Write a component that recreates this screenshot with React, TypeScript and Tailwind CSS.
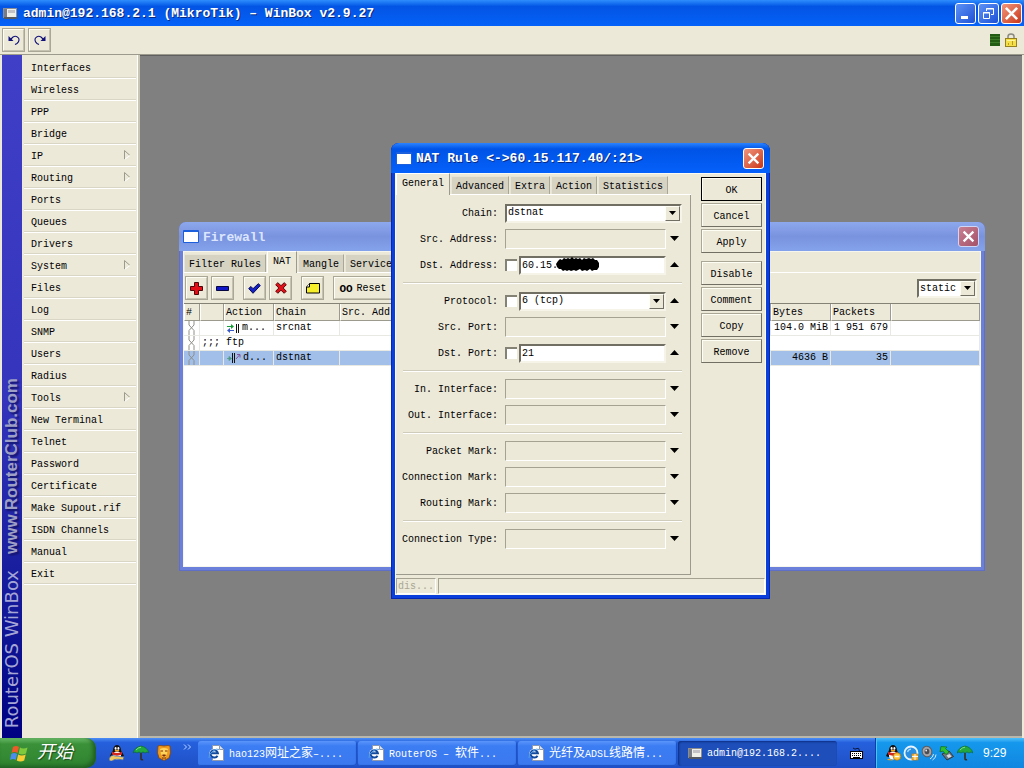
import { useState } from "react";
import type { ReactNode } from "react";

const MENU: { label: string; sub?: boolean }[] = [
  { label: "Interfaces" },
  { label: "Wireless" },
  { label: "PPP" },
  { label: "Bridge" },
  { label: "IP", sub: true },
  { label: "Routing", sub: true },
  { label: "Ports" },
  { label: "Queues" },
  { label: "Drivers" },
  { label: "System", sub: true },
  { label: "Files" },
  { label: "Log" },
  { label: "SNMP" },
  { label: "Users" },
  { label: "Radius" },
  { label: "Tools", sub: true },
  { label: "New Terminal" },
  { label: "Telnet" },
  { label: "Password" },
  { label: "Certificate" },
  { label: "Make Supout.rif" },
  { label: "ISDN Channels" },
  { label: "Manual" },
  { label: "Exit" },
];

const raised =
  "border border-t-[#fffef5] border-l-[#fffef5] border-r-[#c5c2b2] border-b-[#c5c2b2] shadow-[0_0_0_1px_#aaa797] bg-[#ece9d8]";

function Cross({ className }: { className: string }) {
  return (
    <svg viewBox="0 0 12 12" className={className} aria-hidden="true">
      <path d="M1.5 1.5 10.5 10.5M10.5 1.5 1.5 10.5" stroke="#fff" strokeWidth="2.1" fill="none" />
    </svg>
  );
}

function AppIcon() {
  return (
    <svg viewBox="0 0 14 11" className="h-[11px] w-[14px] shrink-0" aria-hidden="true">
      <rect x="0.5" y="0.5" width="13" height="9" fill="#efefea" stroke="#8d8d90" />
      <rect x="1" y="1" width="3" height="8" fill="#777b86" />
      <rect x="5" y="2" width="7" height="3" fill="#c2c2c6" />
      <rect x="1" y="9" width="13" height="2" fill="#55585f" />
    </svg>
  );
}

function PlainIcon() {
  return (
    <svg viewBox="0 0 16 13" className="h-[13px] w-4 shrink-0" aria-hidden="true">
      <rect width="16" height="13" rx="1" fill="#1c5fdc" />
      <rect x="1" y="2" width="14" height="10" fill="#fff" />
    </svg>
  );
}

function Down({ up = false }: { up?: boolean }) {
  return (
    <svg viewBox="0 0 9 5" className="h-[5px] w-[9px]" aria-hidden="true">
      <path d={up ? "M0 5 4.5 0 9 5Z" : "M0 0H9L4.5 5Z"} fill="#000" />
    </svg>
  );
}

function ComboArrow() {
  return (
    <span className="pointer-events-none absolute top-[2px] right-[2px] bottom-[2px] flex w-[15px] items-center justify-center border border-t-[#fffef5] border-l-[#fffef5] border-r-[#716f64] border-b-[#716f64] bg-[#ece9d8]">
      <svg viewBox="0 0 7 4" className="h-1 w-[7px]" aria-hidden="true">
        <path d="M0 0H7L3.5 4Z" fill="#000" />
      </svg>
    </span>
  );
}

function ToolButton({ label, wide, children }: { label: string; wide?: boolean; children: ReactNode }) {
  return (
    <button
      type="button"
      aria-label={label}
      className={`flex h-[22px] shrink-0 items-center justify-center ${wide ? "w-[58px] gap-1 pt-px" : "w-[21px]"} ${raised}`}
    >
      {children}
    </button>
  );
}

function TitleControl({ label, red, dim, children }: { label: string; red?: boolean; dim?: boolean; children: ReactNode }) {
  const tone = dim
    ? "from-[#c98092] to-[#a4516a] border-[#cfd6f6]"
    : red
      ? "from-[#f0957c] to-[#c9330f] border-white"
      : "from-[#5e91f5] to-[#1d50d6] border-white";
  return (
    <button
      type="button"
      aria-label={label}
      className={`flex size-[21px] items-center justify-center rounded-[3px] border bg-linear-to-br ${tone}`}
    >
      {children}
    </button>
  );
}

function Tab({ children, active }: { children: ReactNode; active?: boolean }) {
  return (
    <button
      type="button"
      role="tab"
      aria-selected={!!active}
      className={
        active
          ? "z-10 -mb-px h-[22px] border-t border-l border-r border-t-white border-l-white border-r-[#9c9a8c] bg-[#ece9d8] px-[5px] pb-[2px] whitespace-nowrap"
          : "h-[18px] border-t border-r border-l border-t-[#e8e5d6] border-l-[#e8e5d6] border-r-[#a9a797] bg-[#d6d3c3] px-1 pt-[2px] whitespace-nowrap"
      }
    >
      {children}
    </button>
  );
}

/* ---------- Firewall window ---------- */

function Chain() {
  return (
    <svg viewBox="0 0 9 14" className="mx-auto block h-[14px] w-[9px]" aria-hidden="true">
      <path d="M2 0V4L7 9.500V14M7 0V4L2 9.500V14" stroke="#908e88" fill="none" />
    </svg>
  );
}

function FirewallWindow() {
  const th =
    "h-[17px] border-r border-b border-r-[#9c9a8c] border-b-[#9c9a8c] border-l border-l-white bg-[#ece9d8] p-0 pt-[2px] pl-px text-left font-normal whitespace-nowrap overflow-hidden";
  const td = "h-[15px] border-r border-b border-[#e9e9e4] p-0 px-[2px] whitespace-nowrap overflow-hidden";
  return (
    <section
      aria-label="Firewall"
      className="absolute top-[166px] left-[39px] flex h-[349px] w-[806px] flex-col rounded-t-[7px] bg-[#6b80da] p-1 pt-0 shadow-[inset_0_0_0_1px_#5f6fc8]"
    >
      <header className="-mx-1 flex h-[29px] shrink-0 items-center gap-1 rounded-t-[7px] bg-linear-to-b from-[#8ea8ee] via-[#7a93de] to-[#84a2ec] px-1 pr-[6px]">
        <PlainIcon />
        <h2 className="flex-1 pt-[2px] text-[13px] leading-4 font-bold text-[#dbe5ff]">Firewall</h2>
        <TitleControl label="Close Firewall" dim>
          <Cross className="size-[13px]" />
        </TitleControl>
      </header>
      <div className="flex flex-1 flex-col border border-[#f6f5ee] bg-[#ece9d8]">
        <div role="tablist" className="flex h-[21px] items-end gap-px border-b border-white">
          <Tab>Filter Rules</Tab>
          <Tab active>NAT</Tab>
          <Tab>Mangle</Tab>
          <Tab>Service</Tab>
        </div>
        <div className="flex h-[30px] items-center gap-[5px] pr-[3px] pl-[2px]">
          <ToolButton label="Add">
            <svg viewBox="0 0 13 13" className="size-[13px]">
              <path d="M4.5 .5h4v4h4v4h-4v4h-4v-4h-4v-4h4Z" fill="#e30d18" stroke="#4e0608" />
            </svg>
          </ToolButton>
          <ToolButton label="Delete">
            <svg viewBox="0 0 13 5" className="h-[5px] w-[13px]">
              <path d="M.5 .5h12v4h-12Z" fill="#1218c8" stroke="#060640" />
            </svg>
          </ToolButton>
          <div className="w-px" />
          <ToolButton label="Enable">
            <svg viewBox="0 0 13 11" className="h-[11px] w-[13px]">
              <path d="M.7 5.5 3 3.5 5 5.7 10.3.7 12.3 2.5 5 10.3Z" fill="#1420c8" stroke="#080850" />
            </svg>
          </ToolButton>
          <ToolButton label="Disable">
            <svg viewBox="0 0 12 12" className="size-3">
              <path d="M.7 2.7 2.8.7 6 3.7 9.2.7 11.3 2.7 8.2 6 11.3 9.2 9.2 11.3 6 8.2 2.8 11.3.7 9.2 3.8 6Z" fill="#e20e18" stroke="#5c0709" />
            </svg>
          </ToolButton>
          <div className="w-px" />
          <ToolButton label="Comment">
            <svg viewBox="0 0 14 11" className="h-[11px] w-[14px]">
              <path d="M3.5.5h10v9.5h-13v-6Z" fill="#f5ee28" stroke="#000" />
              <path d="M.5 4h3V.5" fill="#fffbd0" stroke="#000" />
            </svg>
          </ToolButton>
          <div className="w-px" />
          <ToolButton label="Reset Counters" wide>
            <b className="text-[11px]">OO</b>
            <span>Reset</span>
          </ToolButton>
          <div className="relative ml-auto">
            <select
              aria-label="Rule filter"
              className="h-[19px] w-[60px] appearance-none border-2 border-t-[#716f64] border-l-[#716f64] border-r-[#f6f4e8] border-b-[#f6f4e8] bg-white pt-px pl-px"
              defaultValue="static"
            >
              <option>static</option>
              <option>dynamic</option>
              <option>all</option>
            </select>
            <ComboArrow />
          </div>
        </div>
        <div className="flex-1 overflow-hidden border-t border-[#848274] bg-white">
          <table className="w-full table-fixed border-separate border-spacing-0">
            <colgroup>
              <col className="w-4" />
              <col className="w-6" />
              <col className="w-[50px]" />
              <col className="w-[66px]" />
              <col className="w-[431px]" />
              <col className="w-[60px]" />
              <col className="w-[60px]" />
              <col />
            </colgroup>
            <thead>
              <tr>
                <th className={`${th} pl-[3px]`}>#</th>
                <th className={th} aria-label="Flags" />
                <th className={th}>Action</th>
                <th className={th}>Chain</th>
                <th className={th}>Src. Address</th>
                <th className={th}>Bytes</th>
                <th className={th}>Packets</th>
                <th className={th} aria-label="More" />
              </tr>
            </thead>
            <tbody>
              <tr>
                <td className={`${td} px-0`}><Chain /></td>
                <td className={td} />
                <td className={td}>
                  <span className="flex items-center gap-[3px]">
                    <svg viewBox="0 0 13 9" className="h-[9px] w-[13px]" aria-hidden="true">
                      <path d="M1 2.5H6" stroke="#18a038" />
                      <path d="M5 0 8 2.5 5 5Z" fill="#18a038" />
                      <path d="M3 6.5H8" stroke="#3858c8" />
                      <path d="M4 4 1 6.5 4 9Z" fill="#3858c8" />
                      <path d="M10.5 0V9M12.5 0V9" stroke="#111" />
                    </svg>
                    m...
                  </span>
                </td>
                <td className={td}>srcnat</td>
                <td className={td} />
                <td className={`${td} text-right`}>104.0 MiB</td>
                <td className={`${td} text-right`}>1 951 679</td>
                <td className={td} />
              </tr>
              <tr>
                <td className={`${td} px-0`}><Chain /></td>
                <td className={td} colSpan={7}>;;; ftp</td>
              </tr>
              <tr className="bg-[#a1bfe8]">
                <td className={`${td} px-0`}><Chain /></td>
                <td className={td} />
                <td className={td}>
                  <span className="flex items-center gap-[2px]">
                    <svg viewBox="0 0 15 10" className="h-[10px] w-[15px]" aria-hidden="true">
                      <path d="M1 5.5H3M3 3.5 5.5 5.5 3 7.5Z" stroke="#4f9a80" fill="#4f9a80" strokeWidth=".8" />
                      <path d="M6.5 0V10M8.5 0V10" stroke="#111" />
                      <path d="M10 6 13.500 2M11 1.500H14V4.500" stroke="#83529c" fill="none" />
                    </svg>
                    d...
                  </span>
                </td>
                <td className={td}>dstnat</td>
                <td className={td} />
                <td className={`${td} text-right`}>4636 B</td>
                <td className={`${td} text-right`}>35</td>
                <td className={td} />
              </tr>
            </tbody>
          </table>
        </div>
      </div>
    </section>
  );
}

/* ---------- NAT rule dialog ---------- */

type Field = {
  id: string;
  label: string;
  kind: "select" | "empty" | "value" | "valueSelect";
  value?: string;
  scribble?: boolean;
};

const GROUPS: Field[][] = [
  [
    { id: "chain", label: "Chain:", kind: "select", value: "dstnat" },
    { id: "src-address", label: "Src. Address:", kind: "empty" },
    { id: "dst-address", label: "Dst. Address:", kind: "value", value: "60.15.", scribble: true },
  ],
  [
    { id: "protocol", label: "Protocol:", kind: "valueSelect", value: "6 (tcp)" },
    { id: "src-port", label: "Src. Port:", kind: "empty" },
    { id: "dst-port", label: "Dst. Port:", kind: "value", value: "21" },
  ],
  [
    { id: "in-interface", label: "In. Interface:", kind: "empty" },
    { id: "out-interface", label: "Out. Interface:", kind: "empty" },
  ],
  [
    { id: "packet-mark", label: "Packet Mark:", kind: "empty" },
    { id: "connection-mark", label: "Connection Mark:", kind: "empty" },
    { id: "routing-mark", label: "Routing Mark:", kind: "empty" },
  ],
  [{ id: "connection-type", label: "Connection Type:", kind: "empty" }],
];

function FieldRow({ field }: { field: Field }) {
  const [value, setValue] = useState(field.value ?? "");
  const isSelect = field.kind === "select" || field.kind === "valueSelect";
  const hasCheck = field.kind === "value" || field.kind === "valueSelect";
  return (
    <div className="flex h-[26px] items-center">
      <label htmlFor={field.id} className="w-[102px] shrink-0 pt-[2px] text-right whitespace-nowrap">
        {field.label}
      </label>
      <div className="ml-[7px] flex flex-1 items-center gap-[2px]">
        {hasCheck && (
          <input
            type="checkbox"
            aria-label={`Invert ${field.label}`}
            className="size-3 shrink-0 appearance-none border-t-2 border-l-2 border-[#848274] bg-white"
          />
        )}
        <div className="relative flex flex-1">
          {isSelect ? (
            <>
              <select
                id={field.id}
                value={value}
                onChange={(e) => setValue(e.target.value)}
                className="h-[19px] w-full appearance-none border-2 border-t-[#716f64] border-l-[#716f64] border-r-[#f6f4e8] border-b-[#f6f4e8] bg-white pl-px"
              >
                <option>{field.value}</option>
              </select>
              <ComboArrow />
            </>
          ) : field.kind === "value" ? (
            <input
              id={field.id}
              value={value}
              onChange={(e) => setValue(e.target.value)}
              className="h-[19px] w-full min-w-0 border-2 border-t-[#716f64] border-l-[#716f64] border-r-[#f6f4e8] border-b-[#f6f4e8] bg-white pl-px"
            />
          ) : (
            <input
              id={field.id}
              value={value}
              onChange={(e) => setValue(e.target.value)}
              className="h-5 w-full min-w-0 border border-t-[#a5a292] border-l-[#a5a292] border-r-white border-b-white bg-[#ece9d8] pl-px"
            />
          )}
          {field.scribble && (
            <svg viewBox="0 0 44 15" className="absolute top-px left-[37px] h-[15px] w-11" aria-hidden="true">
              <path
                d="M2 4 4 2 6 3 8 1 10 2 12 1 14 2 16 0 18 2 20 1 22 2 24 1 26 3 28 1 30 2 33 1 35 2 37 1 39 3 41 3 43 6 43 10 41 13 38 13 36 14 34 12 31 14 29 13 26 14 24 12 22 13 20 14 18 13 15 14 13 13 11 14 9 13 7 14 5 12 3 12 1 10 0 7Z"
                fill="#000"
              />
            </svg>
          )}
        </div>
      </div>
      {field.kind !== "select" && (
        <button
          type="button"
          aria-label={hasCheck ? `Clear ${field.label}` : `Set ${field.label}`}
          className="flex h-5 w-4 shrink-0 items-center justify-center pb-px"
        >
          <Down up={hasCheck} />
        </button>
      )}
    </div>
  );
}

function DialogButton({ children, main }: { children: ReactNode; main?: boolean }) {
  return (
    <button
      type="button"
      className={`h-6 w-full border pt-[3px] shadow-[inset_1px_1px_0_#fffef5] ${
        main ? "border-black" : "border-t-[#aaa797] border-l-[#aaa797] border-r-[#716f64] border-b-[#716f64]"
      }`}
    >
      {children}
    </button>
  );
}

function NatDialog() {
  return (
    <section
      role="dialog"
      aria-label="NAT Rule"
      className="absolute top-[87px] left-[251px] flex h-[456px] w-[379px] flex-col rounded-t-[8px] bg-[#0a3fdb] p-1 pt-0 shadow-[inset_0_0_0_1px_#0427b4]"
    >
      <header className="-mx-1 flex h-[30px] shrink-0 items-center gap-1 rounded-t-[8px] bg-linear-to-b from-[#2b83ff] via-[#0053e6] via-20% to-[#0561fb] px-[5px] pr-[6px]">
        <PlainIcon />
        <h2 className="flex-1 pt-[2px] text-[13px] leading-4 font-bold whitespace-nowrap text-white [text-shadow:1px_1px_#0a2a80]">
          NAT Rule &lt;-&gt;60.15.117.40/:21&gt;
        </h2>
        <TitleControl label="Close NAT Rule" red>
          <Cross className="size-[13px]" />
        </TitleControl>
      </header>
      <div className="flex flex-1 flex-col border border-[#faf9f2] bg-[#ece9d8]">
        <div className="flex flex-1">
          <div className="flex flex-1 flex-col">
            <div role="tablist" className="flex h-[21px] items-end gap-px border-b border-white">
              <Tab active>General</Tab>
              <Tab>Advanced</Tab>
              <Tab>Extra</Tab>
              <Tab>Action</Tab>
              <Tab>Statistics</Tab>
            </div>
            <form className="flex-1 border-r border-b border-[#9c9a8c] pt-[5px] pr-2" onSubmit={(e) => e.preventDefault()}>
              {GROUPS.map((group, i) => (
                <div key={group[0].id}>
                  {i > 0 && (
                    <div className="flex h-[10px] items-center pl-[7px]">
                      <div className="h-[2px] w-full border-t border-b border-t-[#cfccbb] border-b-white" />
                    </div>
                  )}
                  {group.map((f) => (
                    <FieldRow key={f.id} field={f} />
                  ))}
                </div>
              ))}
            </form>
          </div>
          <div className="flex w-[74px] flex-col gap-[2px] pt-[3px] pr-[3px] pl-[10px]">
            <DialogButton main>OK</DialogButton>
            <DialogButton>Cancel</DialogButton>
            <DialogButton>Apply</DialogButton>
            <div className="h-1" />
            <DialogButton>Disable</DialogButton>
            <DialogButton>Comment</DialogButton>
            <DialogButton>Copy</DialogButton>
            <DialogButton>Remove</DialogButton>
          </div>
        </div>
        <footer className="flex h-[19px] gap-[2px] pt-[3px] text-[#a9a693]">
          <div className="w-10 border border-t-[#a5a292] border-l-[#a5a292] border-r-white border-b-white pl-px leading-4">
            dis...
          </div>
          <div className="flex-1 border border-t-[#a5a292] border-l-[#a5a292] border-r-white border-b-white" />
        </footer>
      </div>
    </section>
  );
}

/* ---------- Taskbar ---------- */

function Penguin({ badge }: { badge: "scarf" | "busy" }) {
  return (
    <svg viewBox="0 0 16 16" className="size-4 shrink-0" aria-hidden="true">
      <path d="M1 11C2 8 4 6 4 5 4 2 6 0 8 0s4 2 4 5c0 1 2 3 3 6l-2 1H3Z" fill="#14100f" />
      <ellipse cx="8" cy="10.500" rx="4" ry="4" fill="#fff" />
      <ellipse cx="6.600" cy="3.400" rx="1" ry="1.400" fill="#fff" />
      <ellipse cx="9.400" cy="3.400" rx="1" ry="1.400" fill="#fff" />
      <ellipse cx="8" cy="5.600" rx="2.400" ry=".9" fill="#f5a51b" />
      <path d="M3 6.500Q8 9.500 13 6.500V9.500Q8 11.800 3 9.500Z" fill="#d3281d" />
      {badge === "scarf" ? (
        <path d="M0 14Q2 9 6 11L15 12 14 15Q6 13 3 16H1Z" fill="#f2c95c" stroke="#466fb0" strokeWidth=".7" />
      ) : (
        <>
          <path d="M2 15Q4 12.500 8 15.500Z" fill="#f5a51b" />
          <circle cx="12" cy="11.500" r="3.800" fill="#ffc43a" stroke="#b36b09" strokeWidth=".7" />
          <path d="M9.800 11.500H14.200" stroke="#fff" strokeWidth="1.500" />
        </>
      )}
    </svg>
  );
}

function Umbrella() {
  return (
    <svg viewBox="0 0 16 16" className="size-4 shrink-0" aria-hidden="true">
      <path d="M8 8V13.500Q8 15.300 10 14.500" stroke="#3c2b18" strokeWidth="1.600" fill="none" />
      <path d="M0 8Q2 2 8 1q6 1 8 7-2-2-4 0Q10 6 8 8 6 6 4 8 2 6 0 8Z" fill="#22a83e" stroke="#0b6420" strokeWidth=".6" />
      <path d="M3 5Q5 2.500 8 2.200" stroke="#7fe08a" fill="none" />
    </svg>
  );
}

function Lion() {
  return (
    <svg viewBox="0 0 14 16" className="h-4 w-3.5 shrink-0" aria-hidden="true">
      <path d="M1 1 3 .5 7 1 11 .5 13 1 13.500 8 12 13 7 15.500 2 13 .5 8Z" fill="#f09a1c" stroke="#87440a" strokeWidth=".8" />
      <path d="M3 4Q7 2 11 4L10 9 7 14 4 9Z" fill="#ffd45d" />
      <path d="M3.500 6H6M8 6h2.500M5.500 10h3L7 11.500ZM5 13h4" stroke="#7a2a0a" fill="#7a2a0a" />
    </svg>
  );
}

function PageIcon() {
  return (
    <svg viewBox="0 0 16 16" className="size-4 shrink-0" aria-hidden="true">
      <path d="M4.500.5h7l4 4v11h-11Z" fill="#fff" stroke="#8d98ac" />
      <path d="M11.500.5v4h4" fill="#dfe6f3" stroke="#8d98ac" />
      <circle cx="6" cy="8.500" r="4.600" fill="#fff" />
      <path d="M9.500 10.700A3.700 3.700 0 1 1 9.900 8.200H3.500" stroke="#124a9e" strokeWidth="2" fill="none" />
      <path d="M1 13Q0 10 5 6 9 3 11 4.500" stroke="#52a0ea" fill="none" />
    </svg>
  );
}

function Task({ icon, active, children }: { icon: ReactNode; active?: boolean; children: ReactNode }) {
  return (
    <button
      type="button"
      className={`flex h-[25px] max-w-[159px] min-w-0 flex-1 items-center gap-[5px] overflow-hidden rounded-[3px] pl-[10px] whitespace-nowrap text-white ${
        active
          ? "bg-[#1d4eb9] shadow-[inset_1px_1px_2px_#0d2f83]"
          : "bg-linear-to-b from-[#5b95fb] via-[#3c7df3] via-20% to-[#3a78ee] shadow-[inset_-1px_-1px_1px_#1c4fc0]"
      }`}
    >
      {icon}
      <span className="pt-[2px]">{children}</span>
    </button>
  );
}

function Han({ children }: { children: ReactNode }) {
  return <span className="text-xs leading-3">{children}</span>;
}

function Taskbar() {
  return (
    <footer className="flex h-[30px] shrink-0 items-stretch bg-linear-to-b from-[#4b8df6] via-[#2660dc] via-15% to-[#1f4fc6]">
      <button
        type="button"
        className="flex w-24 shrink-0 items-center gap-2 rounded-r-[10px] bg-linear-to-b from-[#6cbb6a] via-[#3a9138] via-20% to-[#2f8230] pl-[10px] shadow-[inset_-3px_-2px_4px_#1f5d22]"
      >
        <svg viewBox="0 0 19 17" className="h-[17px] w-[19px]" aria-hidden="true">
          <path d="M3 2Q6 0 9 2L7.500 8Q4.500 6 1.500 8Z" fill="#ee5a2a" />
          <path d="M10 2.500Q13 4.500 17.500 2.500L16 8.500Q12 10.500 8.600 8.500Z" fill="#7fc93d" />
          <path d="M1.200 9Q4 7 7.200 9L5.700 15Q3 13 0 15Z" fill="#4c8df0" />
          <path d="M8.200 9.500Q11.500 11.500 15.700 9.500L14.200 15.500Q10.500 17.500 6.700 15.500Z" fill="#f9cd34" />
        </svg>
        <span className="text-[18px] leading-5 text-white italic [text-shadow:1px_1px_1px_#1b4a1c]">开始</span>
      </button>
      <nav aria-label="Quick launch" className="flex w-[102px] shrink-0 items-center gap-2 pl-[13px]">
        <Penguin badge="scarf" />
        <Umbrella />
        <Lion />
        <svg viewBox="0 0 9 6" className="mb-3 ml-1 h-[6px] w-[9px]" aria-hidden="true">
          <path d="M1 .5 3.500 3 1 5.500M5 .5 7.500 3 5 5.500" stroke="#b8d4ff" fill="none" />
        </svg>
      </nav>
      <div className="flex min-w-0 flex-1 items-center gap-px">
        <Task icon={<PageIcon />}>
          hao123<Han>网址之家</Han>–....
        </Task>
        <Task icon={<PageIcon />}>
          RouterOS – <Han>软件</Han>...
        </Task>
        <Task icon={<PageIcon />}>
          <Han>光纤及</Han>ADSL<Han>线路情</Han>...
        </Task>
        <Task icon={<AppIcon />} active>
          admin@192.168.2....
        </Task>
      </div>
      <div className="flex w-[38px] shrink-0 items-center justify-center">
        <svg viewBox="0 0 13 12" className="h-3 w-[13px]" aria-hidden="true">
          <path d="M3 1Q5 3 7 1.500T9.500 4" stroke="#0a1438" fill="none" />
          <rect x=".5" y="4.500" width="12" height="7" fill="#fff" stroke="#000" />
          <path d="M2 6.500H11M2 8.500H11" stroke="#000" strokeDasharray="1 1" />
          <path d="M3 10.500H10" stroke="#000" />
        </svg>
      </div>
      <div className="flex w-[149px] shrink-0 items-center gap-[2px] border-l border-[#0b3fa3] bg-linear-to-b from-[#4cc0fb] via-[#1598ed] via-15% to-[#1186e0] pl-[9px] text-white shadow-[inset_1px_0_#4cc4fb]">
        <Penguin badge="busy" />
        <svg viewBox="0 0 16 16" className="size-4 shrink-0" aria-hidden="true">
          <circle cx="8" cy="8" r="6.500" fill="#2a8fe0" stroke="#e8f4ff" strokeWidth="1.800" />
          <path d="M4.500 7A4 4 0 0 1 8 4.200" stroke="#a9dcff" strokeWidth="1.200" fill="none" />
          <rect x="9" y="9" width="6" height="6" fill="#f6b73c" stroke="#c97d12" strokeWidth=".7" />
          <path d="M12 9V15M9 11.500H15" stroke="#fff" strokeWidth=".9" />
        </svg>
        <svg viewBox="0 0 16 16" className="size-4 shrink-0" aria-hidden="true">
          <ellipse cx="6" cy="6.500" rx="4.800" ry="5.400" fill="#a5a5a8" stroke="#5b5b60" transform="rotate(-20 6 6.500)" />
          <ellipse cx="6" cy="6.500" rx="2.400" ry="2.800" fill="#4c4c54" />
          <circle cx="5.200" cy="5.500" r=".9" fill="#e8e8ee" />
          <path d="M9 14Q12 12.500 12.500 9M11.500 15Q15 13 15 9.500" stroke="#d5e9ff" fill="none" />
        </svg>
        <svg viewBox="0 0 16 16" className="size-4 shrink-0" aria-hidden="true">
          <path d="M3 9 10 6 14.500 11.500 8 15Z" fill="#6e7680" stroke="#30363e" />
          <path d="M7.500 10.500 10.500 9 12.500 11.500 9.500 13Z" fill="#d9dde2" />
          <path d="M1 7 2 1.500 8 2 6.500 3.500 10 7 7 9.500 3.800 6Z" fill="#2fc030" stroke="#0c6a16" strokeWidth=".7" />
        </svg>
        <Umbrella />
        <time className="ml-2 font-[Liberation_Sans] text-xs">9:29</time>
      </div>
    </footer>
  );
}

/* ---------- Main window ---------- */

export default function App() {
  return (
    <div className="flex h-screen flex-col overflow-hidden bg-[#ece9d8] font-['Liberation_Mono','Noto_Sans_CJK_SC',monospace] text-[10px] leading-3 text-black">
      <header className="flex h-[26px] shrink-0 items-center gap-[6px] bg-linear-to-b from-[#2f8dfd] via-[#0354e4] via-25% to-[#0562f8] px-[3px] pr-[2px]">
        <AppIcon />
        <h1 className="flex-1 pt-[2px] text-[13px] leading-4 font-bold whitespace-nowrap text-white [text-shadow:1px_1px_#0a2a80]">
          admin@192.168.2.1 (MikroTik) – WinBox v2.9.27
        </h1>
        <div className="flex gap-[2px]">
          <TitleControl label="Minimize">
            <svg viewBox="0 0 13 13" className="size-[13px]">
              <rect x="2" y="9" width="7" height="3" fill="#fff" />
            </svg>
          </TitleControl>
          <TitleControl label="Restore">
            <svg viewBox="0 0 13 13" className="size-[13px]" fill="none" stroke="#fff">
              <path d="M4.500 4V1.500h7v6H9" />
              <path d="M4 2H12" />
              <path d="M1.500 5.500h6v6h-6ZM1 6H8" />
            </svg>
          </TitleControl>
          <TitleControl label="Close" red>
            <Cross className="size-[15px]" />
          </TitleControl>
        </div>
      </header>

      <div className="flex h-[29px] shrink-0 items-center gap-[5px] border-b border-[#9c9a8c] px-[3px]">
        <ToolButton label="Undo">
          <svg viewBox="0 0 12 10" className="h-[10px] w-3" fill="none" stroke="#101078">
            <path d="M2.500 4.500 5 2Q8 0 10.500 3 12 6 9 8.500L7 9.500" strokeWidth="1.100" />
            <path d="M0.500 1V6H5.500Z" fill="#101078" stroke="none" />
          </svg>
        </ToolButton>
        <ToolButton label="Redo">
          <svg viewBox="0 0 12 10" className="h-[10px] w-3" fill="none" stroke="#101078">
            <path d="M9.500 4.500 7 2Q4 0 1.500 3 0 6 3 8.500L5 9.500" strokeWidth="1.100" />
            <path d="M11.500 1V6H6.500Z" fill="#101078" stroke="none" />
          </svg>
        </ToolButton>
        <div className="ml-auto flex items-center gap-[5px] pr-1">
          <svg viewBox="0 0 10 12" className="h-3 w-[10px]" aria-hidden="true">
            <rect width="10" height="12" fill="#235b12" />
            <path d="M0 2.500H10M0 5.500H10M0 8.500H10" stroke="#3d7a28" />
          </svg>
          <svg viewBox="0 0 12 14" className="h-[14px] w-3" aria-hidden="true">
            <path d="M3 6V3.500Q3 1 6 1t3 2.500V6" stroke="#8a8a80" strokeWidth="1.500" fill="none" />
            <rect x=".5" y="5.500" width="11" height="8" fill="#f5df49" stroke="#96801c" />
            <path d="M2 7.500H10" stroke="#fff6a0" />
            <path d="M3.500 10V12M7.500 8V12" stroke="#b99a22" />
          </svg>
        </div>
      </div>

      <div className="flex min-h-0 flex-1 px-[2px]">
        <div className="flex w-5 shrink-0 flex-col items-center justify-end gap-4 bg-linear-to-b from-[#3f3fc8] via-[#3434bd] via-50% to-[#000082] pb-[10px] leading-5 whitespace-nowrap">
          <span className="rotate-180 font-[Liberation_Sans] text-[17px] font-bold text-[#9d9fc4] [text-shadow:-2px_2px_2px_#14146c] [writing-mode:vertical-rl]">
            www.RouterClub.com
          </span>
          <span className="rotate-180 font-[DejaVu_Sans] text-[18px] text-[#a5a6d6] [writing-mode:vertical-rl]">
            RouterOS WinBox
          </span>
        </div>
        <nav
          aria-label="Main menu"
          className="w-[118px] shrink-0 border-r-2 border-r-[#c9c6b6] px-[2px] pt-[2px] shadow-[inset_-1px_0_#fff]"
        >
          {MENU.map((m) => (
            <button
              key={m.label}
              type="button"
              className="flex h-[22px] w-full items-center justify-between border-b border-b-white pt-[3px] pr-[5px] pl-[7px] text-left shadow-[inset_0_-1px_#d9d6c6]"
            >
              {m.label}
              {m.sub && (
                <svg viewBox="0 0 7 10" className="mb-1 h-[10px] w-[7px]" aria-hidden="true">
                  <path d="M.5 9.500V.5L6 5.500" stroke="#9c9a8c" fill="none" />
                  <path d="M6 5.500.5 9.500" stroke="#fff" />
                </svg>
              )}
            </button>
          ))}
        </nav>
        <main className="relative flex-1 overflow-hidden border-t border-b-2 border-t-[#5f5f5f] border-b-[#b9b7ac] bg-[#808080]">
          <FirewallWindow />
          <NatDialog />
        </main>
      </div>
      <Taskbar />
    </div>
  );
}
